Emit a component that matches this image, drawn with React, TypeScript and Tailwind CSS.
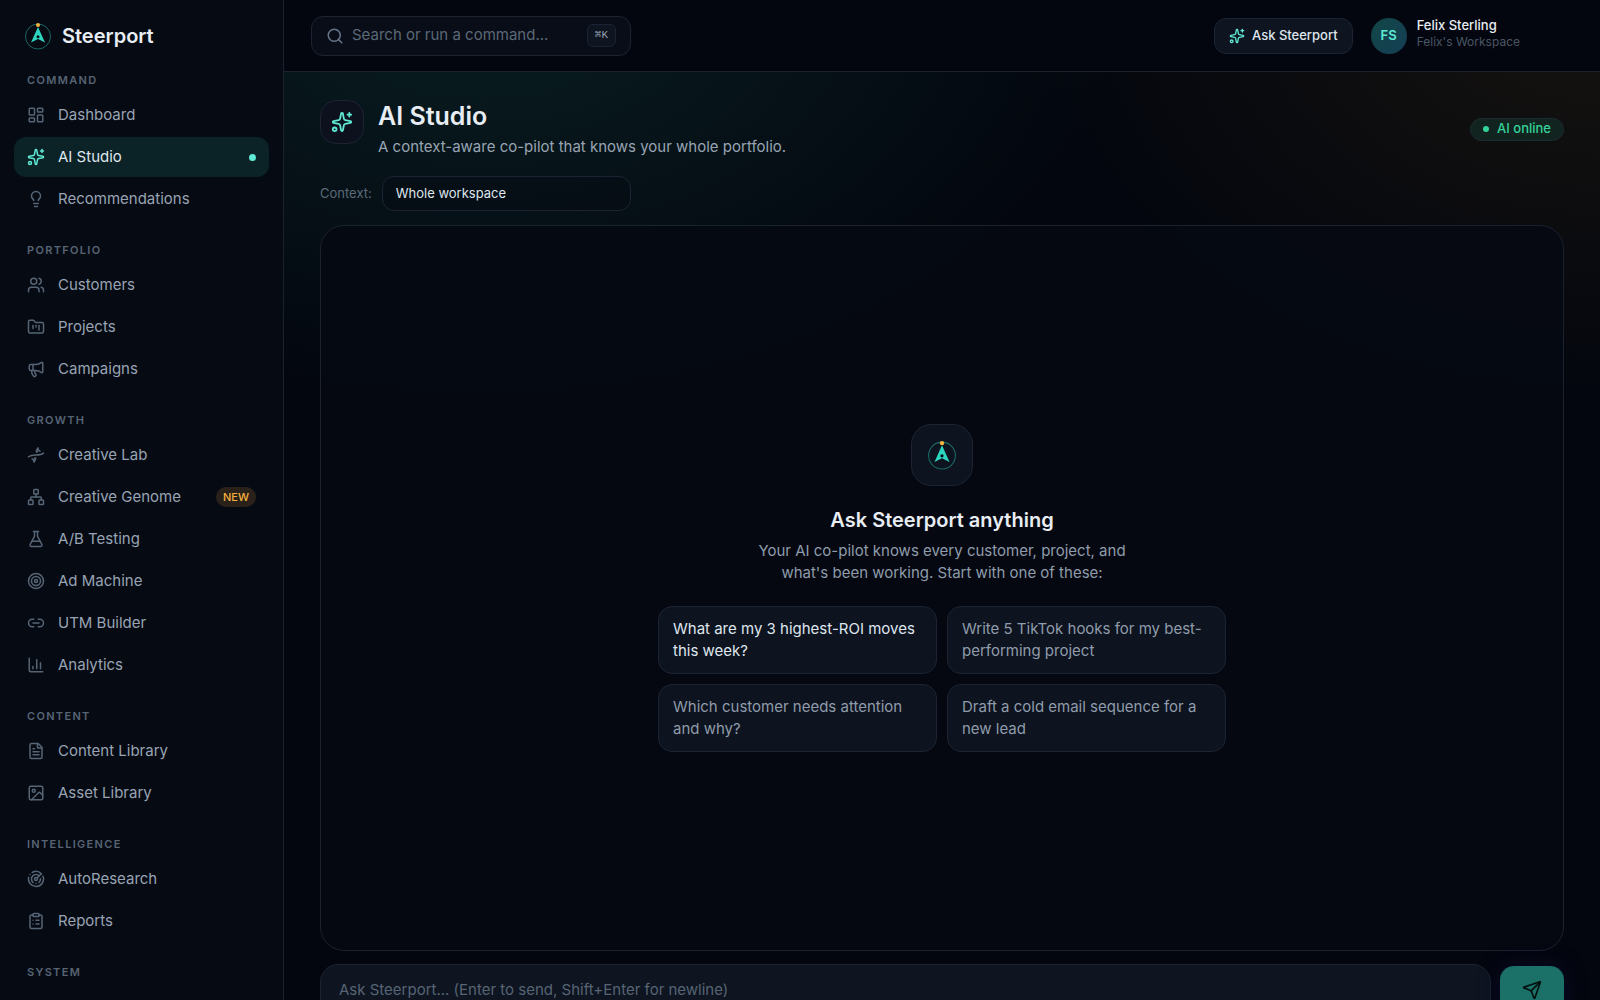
import type { ComponentType } from 'react';
import {
  ChartColumn,
  ClipboardList,
  FileText,
  FlaskConical,
  FolderKanban,
  Image,
  LayoutDashboard,
  Lightbulb,
  Link2,
  Megaphone,
  Network,
  Radar,
  Search,
  Send,
  Sparkles,
  Target,
  Users,
} from 'lucide-react';
import clsx from 'clsx';

type IconProps = { size?: number; strokeWidth?: number; className?: string };

type NavItem = {
  label: string;
  icon: ComponentType<IconProps>;
  active?: boolean;
  badge?: string;
};

type NavSection = { title: string; items: NavItem[] };

function CreativeLabIcon({ size = 18, strokeWidth = 2, className }: IconProps) {
  return (
    <svg
      width={size}
      height={size}
      viewBox="0 0 24 24"
      fill="none"
      stroke="currentColor"
      strokeWidth={strokeWidth}
      strokeLinecap="round"
      strokeLinejoin="round"
      className={className}
      aria-hidden="true"
    >
      <path d="M2 14.500c3-2.500 6.500-2.500 10-2.500s7 0 10-2.500" />
      <path d="M12.500 8c0-2.500.7-4 2-5.500l.8 2.800 2 1.500" />
      <path d="M14.500 6.500l-.8 1.500" />
      <path d="M11.500 16c0 2.500-.7 4-2 5.500l-.8-2.800-2-1.500" />
      <path d="M9.500 17.500l.8-1.500" />
    </svg>
  );
}

function Logo({ size = 28 }: { size?: number }) {
  return (
    <svg width={size} height={size} viewBox="0 0 28 28" fill="none" aria-hidden="true">
      <circle cx="14" cy="14.500" r="12.500" stroke="#2dd4bf" strokeOpacity="0.45" />
      <path d="M14 5l7 15.500-7-3.500-7 3.500z" fill="#2dd4bf" />
      <circle cx="14" cy="14.800" r="1.500" fill="#060a13" />
      <circle cx="14" cy="3" r="2" fill="#fbb53c" />
    </svg>
  );
}

const sections: NavSection[] = [
  {
    title: 'Command',
    items: [
      { label: 'Dashboard', icon: LayoutDashboard },
      { label: 'AI Studio', icon: Sparkles, active: true },
      { label: 'Recommendations', icon: Lightbulb },
    ],
  },
  {
    title: 'Portfolio',
    items: [
      { label: 'Customers', icon: Users },
      { label: 'Projects', icon: FolderKanban },
      { label: 'Campaigns', icon: Megaphone },
    ],
  },
  {
    title: 'Growth',
    items: [
      { label: 'Creative Lab', icon: CreativeLabIcon },
      { label: 'Creative Genome', icon: Network, badge: 'NEW' },
      { label: 'A/B Testing', icon: FlaskConical },
      { label: 'Ad Machine', icon: Target },
      { label: 'UTM Builder', icon: Link2 },
      { label: 'Analytics', icon: ChartColumn },
    ],
  },
  {
    title: 'Content',
    items: [
      { label: 'Content Library', icon: FileText },
      { label: 'Asset Library', icon: Image },
    ],
  },
  {
    title: 'Intelligence',
    items: [
      { label: 'AutoResearch', icon: Radar },
      { label: 'Reports', icon: ClipboardList },
    ],
  },
  { title: 'System', items: [] },
];

const prompts = [
  'What are my 3 highest-ROI moves this week?',
  'Write 5 TikTok hooks for my best-performing project',
  'Which customer needs attention and why?',
  'Draft a cold email sequence for a new lead',
];

function NavLink({ item }: { item: NavItem }) {
  const Icon = item.icon;

  return (
    <a
      href="#"
      aria-current={item.active ? 'page' : undefined}
      className={clsx(
        'flex h-10 items-center gap-[13px] rounded-xl px-[13px] text-[15px]',
        item.active ? 'bg-[#0b2226] text-[#dfe6ee]' : 'text-[#98a4b3]',
      )}
    >
      <Icon size={18} strokeWidth={2} className={item.active ? 'text-[#5eead4]' : 'text-[#566575]'} />
      <span className="flex-1 truncate">{item.label}</span>
      {item.badge ? (
        <span className="rounded-full bg-[#2a221a] px-[7px] text-[11px] leading-5 font-medium text-[#f5b13d]">
          {item.badge}
        </span>
      ) : null}
      {item.active ? <span className="size-[7px] rounded-full bg-[#5eead4]" /> : null}
    </a>
  );
}

function Sidebar() {
  return (
    <aside className="w-[284px] shrink-0 overflow-hidden border-r border-[#1a212f] bg-[#060a13]">
      <div className="flex h-[71px] items-center gap-2.5 px-6">
        <Logo />
        <span className="text-[20px] font-semibold text-[#e8edf4]">Steerport</span>
      </div>
      <nav className="flex flex-col gap-[22px] px-3.5">
        {sections.map((section) => (
          <div key={section.title}>
            <h2 className="mb-1.5 px-[13px] text-[11px] leading-[18px] font-semibold tracking-[0.12em] text-[#566474] uppercase">
              {section.title}
            </h2>
            <ul className="flex flex-col gap-0.5">
              {section.items.map((item) => (
                <li key={item.label}>
                  <NavLink item={item} />
                </li>
              ))}
            </ul>
          </div>
        ))}
      </nav>
    </aside>
  );
}

function TopBar() {
  return (
    <header className="flex h-[72px] shrink-0 items-center justify-between border-b border-[#1a212f] bg-[#03060e] pr-20 pl-[27px]">
      <label className="flex h-10 w-80 items-center gap-2 rounded-xl border border-[#1c2433] bg-[#090d17] px-3.5">
        <Search size={18} strokeWidth={2} className="shrink-0 text-[#66768a]" />
        <input
          type="text"
          aria-label="Search or run a command"
          placeholder="Search or run a command..."
          className="min-w-0 flex-1 bg-transparent text-[15px] text-[#dfe6ee] outline-none placeholder:text-[#5b6978]"
        />
        <kbd className="rounded-md border border-[#1c2433] bg-[#0e1420] px-[7px] font-['Liberation_Mono','DejaVu_Sans_Mono',monospace] text-[11px] leading-[21px] text-[#94a1b0]">
          ⌘K
        </kbd>
      </label>
      <div className="flex items-center gap-[18px]">
        <button
          type="button"
          className="flex h-9 items-center gap-[7px] rounded-xl border border-[#1c2433] bg-[#0e1420] px-3.5 text-[13px] font-medium text-[#dfe6ee]"
        >
          <Sparkles size={16} strokeWidth={2} className="text-[#5eead4]" />
          Ask Steerport
        </button>
        <div className="flex items-center gap-2.5">
          <span className="flex size-9 items-center justify-center rounded-full bg-linear-to-br from-[#124746] to-[#153e55] text-[13px] font-semibold text-[#5eead4]">
            FS
          </span>
          <div className="pb-1">
            <p className="text-[13px] leading-[17px] font-medium text-[#e8edf4]">Felix Sterling</p>
            <p className="text-[12px] leading-4 text-[#4a5664]">Felix's Workspace</p>
          </div>
        </div>
      </div>
    </header>
  );
}

function EmptyChat() {
  return (
    <section className="flex min-h-[calc(100vh-274px)] flex-col items-center justify-center rounded-3xl border border-[#1a212f] bg-[#060912]/85 p-6">
      <div className="flex size-[62px] items-center justify-center rounded-[20px] border border-[#1c2433] bg-[#0d131f]">
        <Logo size={30} />
      </div>
      <h2 className="mt-[18px] text-[20px] leading-8 font-semibold text-[#e8edf4]">Ask Steerport anything</h2>
      <p className="mt-1 max-w-[400px] text-center text-[15px] leading-[22px] text-[#8f9cab]">
        Your AI co-pilot knows every customer, project, and what's been working. Start with one of these:
      </p>
      <div className="mt-[22px] grid w-full max-w-[568px] grid-cols-2 gap-2.5">
        {prompts.map((prompt, index) => (
          <button
            key={prompt}
            type="button"
            className={clsx(
              'rounded-[14px] border border-[#1c2433] bg-[#0d131f] px-3.5 py-[11px] text-left text-[15px] leading-[22px]',
              index === 0 ? 'text-[#dfe6ee]' : 'text-[#8f9cab]',
            )}
          >
            {prompt}
          </button>
        ))}
      </div>
    </section>
  );
}

export default function App() {
  return (
    <div className="flex h-screen overflow-hidden bg-[#03060e] font-[Inter,'Liberation_Sans',sans-serif] text-[#dfe6ee]">
      <Sidebar />
      <div className="flex min-w-0 flex-1 flex-col bg-[radial-gradient(ellipse_640px_400px_at_15%_0%,#091e21,transparent),radial-gradient(ellipse_560px_400px_at_100%_0%,#171410,transparent)]">
        <TopBar />
        <main className="min-h-0 flex-1 overflow-y-auto px-9 pt-7 [scrollbar-width:none]">
          <div className="flex items-center justify-between">
            <div className="flex items-start gap-3.5">
              <div className="flex size-11 items-center justify-center rounded-2xl border border-[#1c2433] bg-[#0d111d]">
                <Sparkles size={22} strokeWidth={2} className="text-[#5eead4]" />
              </div>
              <div>
                <h1 className="text-[25px] leading-8 font-semibold text-[#e8edf4]">AI Studio</h1>
                <p className="mt-1 text-[15px] leading-[22px] text-[#98a4b3]">
                  A context-aware co-pilot that knows your whole portfolio.
                </p>
              </div>
            </div>
            <span className="flex h-[23px] items-center gap-2 rounded-full border border-[#1c2a33] bg-[#11241f] px-3 text-[13px] font-medium text-[#34d399]">
              <span className="size-1.5 rounded-full bg-[#34d399]" />
              AI online
            </span>
          </div>

          <div className="mt-[18px] flex items-center gap-2.5">
            <label htmlFor="context" className="text-[13px] text-[#5b6978]">
              Context:
            </label>
            <select
              id="context"
              className="h-[35px] w-[249px] appearance-none rounded-xl border border-[#1c2433] bg-[#060a13]/50 px-[13px] text-[13px] text-[#dfe6ee] outline-none"
            >
              <option>Whole workspace</option>
            </select>
          </div>

          <div className="mt-3.5 flex flex-col gap-[13px] pb-6">
            <EmptyChat />
            <form className="flex items-start gap-[9px]">
              <textarea
                rows={2}
                aria-label="Message"
                placeholder="Ask Steerport... (Enter to send, Shift+Enter for newline)"
                className="h-[60px] flex-1 resize-none rounded-[18px] border border-[#1c2433] bg-[#0e1420] px-[18px] py-3.5 text-[15px] leading-[22px] outline-none placeholder:text-[#566474]"
              />
              <button
                type="submit"
                aria-label="Send"
                className="mt-0.5 flex h-12 w-16 items-center justify-center rounded-[14px] bg-[#1b7168] text-[#04100f] shadow-[0_0_20px_#0a0a2a]"
              >
                <Send size={20} strokeWidth={2} />
              </button>
            </form>
          </div>
        </main>
      </div>
    </div>
  );
}
